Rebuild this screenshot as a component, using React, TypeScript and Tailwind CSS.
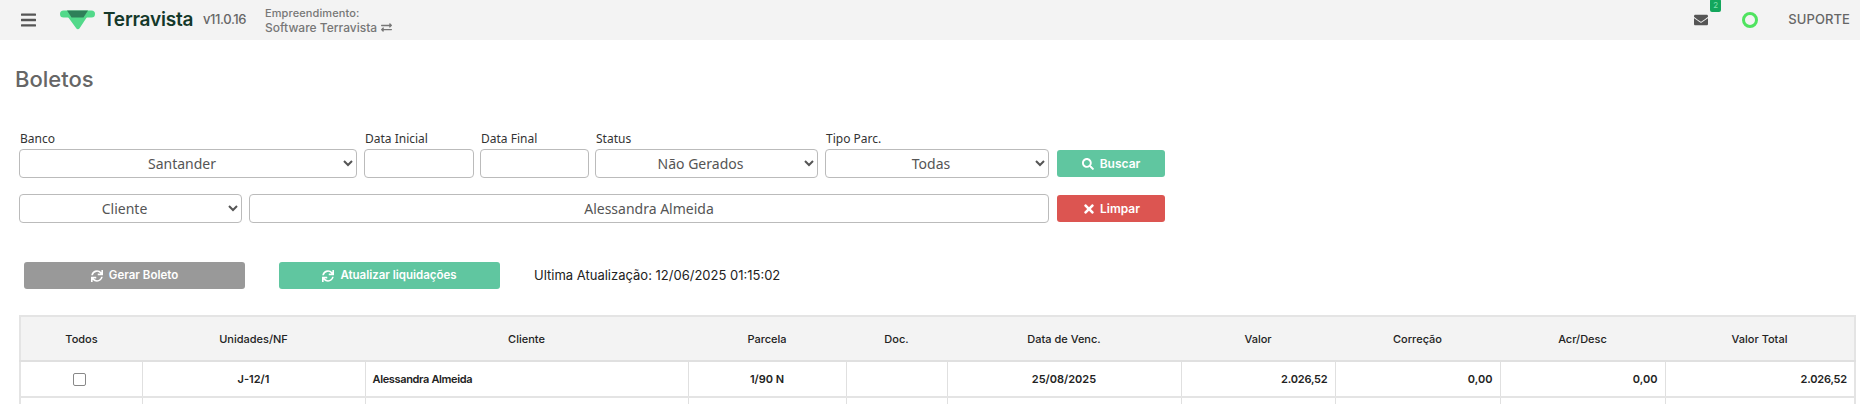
import { FaBars, FaEnvelope, FaExchangeAlt, FaSearch, FaSync, FaTimes } from 'react-icons/fa'
import { ReactNode } from 'react'
import clsx from 'clsx'

const HEAD_FONT = 'font-["Inter","Liberation_Sans",sans-serif]'
const FORM_FONT = 'font-["Noto_Sans","Open_Sans",sans-serif]'

const columns = [
  { title: 'Todos', width: 'w-[122px]' },
  { title: 'Unidades/NF', width: 'w-[223px]' },
  { title: 'Cliente', width: 'w-[323px]' },
  { title: 'Parcela', width: 'w-[158px]' },
  { title: 'Doc.', width: 'w-[101px]' },
  { title: 'Data de Venc.', width: 'w-[234px]' },
  { title: 'Valor', width: 'w-[154px]' },
  { title: 'Correção', width: 'w-[165px]' },
  { title: 'Acr/Desc', width: 'w-[165px]' },
  { title: 'Valor Total', width: 'w-[190px]' },
]

function Logo() {
  return (
    <svg width="36" height="20" viewBox="0 0 36 20" className="shrink-0">
      <path d="M3.5 0.5H31.5a3.5 3.5 0 0 1 0 7H3.5a3.5 3.5 0 0 1 0-7Z" fill="#52d98a" />
      <path d="M8 7H27L19.6 18.2a2 2 0 0 1-3.4 0Z" fill="#52d98a" />
      <path d="M7 0.5H28L23.5 7.5H11.5Z" fill="#2e8059" />
    </svg>
  )
}

function Field({ label, width, children }: { label: string, width: string, children: ReactNode }) {
  return (
    <div className={clsx('flex flex-col shrink-0', width)}>
      <label className="h-[21px] pt-[2px] pl-px text-[12px] leading-[18px] text-[#333]">{label}</label>
      {children}
    </div>
  )
}

function Select({ value, className }: { value: string, className?: string }) {
  return (
    <select
      defaultValue={value}
      className={clsx('block h-[29px] bg-white border border-[#bbb] rounded-[4px] text-center text-[14px] text-[#555]', className)}
    >
      <option>{value}</option>
    </select>
  )
}

function Button({ icon, children, className }: { icon: ReactNode, children: ReactNode, className: string }) {
  return (
    <button className={clsx('flex items-center justify-center gap-[6px] rounded-[3px] text-white font-semibold', className)}>
      {icon}
      {children}
    </button>
  )
}

export default function App() {
  return (
    <div className={clsx('h-[404px] w-[1860px] overflow-hidden bg-white', HEAD_FONT)}>
      <header className="flex items-center h-[40px] bg-[#f3f3f3] text-[#666]">
        <FaBars className="ml-[21px] text-[#555] w-[15px] h-[18px]" />
        <div className="ml-[24px]"><Logo /></div>
        <span className="ml-[7px] text-[19px] font-semibold text-[#14382a] w-[93px] tracking-[-0.2px]">Terravista</span>
        <span className="ml-[7px] text-[13px] font-medium text-[#666] w-[58px] tracking-[-0.4px]">v11.0.16</span>
        <div className="ml-[4px] flex flex-col text-[#777]">
          <span className="text-[11px] leading-[15px] font-medium tracking-[0.1px]">Empreendimento:</span>
          <span className="flex items-center gap-1 text-[12px] leading-[14px] font-medium">
            Software Terravista <FaExchangeAlt className="w-[11px] h-[11px]" />
          </span>
        </div>

        <div className="ml-auto flex items-center">
          <div className="relative mr-[34px]">
            <FaEnvelope className="w-[14px] h-[14px] text-[#555]" />
            <span className="absolute left-[16px] -top-[14px] w-[11px] h-[13px] rounded-[2px] bg-[#13a65c] text-[#7fe0ac] text-[8px] leading-[13px] text-center">2</span>
          </div>
          <div className="w-[16px] h-[16px] rounded-full border-[3px] border-[#4fe35f]" />
          <span className="ml-[30px] mr-[10px] text-[13px] font-medium text-[#666] tracking-[0.1px]">SUPORTE</span>
        </div>
      </header>

      <h1 className="pt-[27px] pl-[15px] h-[77px] text-[22px] leading-[25px] font-medium text-[#666]">Boletos</h1>

      <div className={clsx('pl-[19px]', FORM_FONT)}>
        <div className="flex items-end mt-[11px] h-[50px]">
          <Field label="Banco" width="w-[338px] mr-[7px]">
            <Select value="Santander" className="w-full" />
          </Field>
          <Field label="Data Inicial" width="w-[110px] mr-[6px]">
            <input className="block h-[29px] w-full border border-[#bbb] rounded-[4px]" />
          </Field>
          <Field label="Data Final" width="w-[109px] mr-[6px]">
            <input className="block h-[29px] w-full border border-[#bbb] rounded-[4px]" />
          </Field>
          <Field label="Status" width="w-[223px] mr-[7px]">
            <Select value="Não Gerados" className="w-full" />
          </Field>
          <Field label="Tipo Parc." width="w-[224px] mr-[8px]">
            <Select value="Todas" className="w-full" />
          </Field>
          <Button icon={<FaSearch className="w-[12px] h-[12px]" />} className={clsx('w-[108px] h-[27px] mb-px bg-[#60c6a0] text-[12px]', HEAD_FONT)}>
            Buscar
          </Button>
        </div>

        <div className="flex items-center mt-[16px] h-[29px]">
          <Select value="Cliente" className="w-[223px] mr-[7px]" />
          <input
            defaultValue="Alessandra Almeida"
            className="block h-[29px] w-[800px] mr-[8px] border border-[#bbb] rounded-[4px] text-center text-[14px] text-[#555]"
          />
          <Button icon={<FaTimes className="w-[14px] h-[14px] -mr-[2px]" />} className={clsx('w-[108px] h-[27px] bg-[#dc5551] text-[12px]', HEAD_FONT)}>
            Limpar
          </Button>
        </div>
      </div>

      <div className="flex items-center mt-[39px] ml-[24px] h-[27px]">
        <Button icon={<FaSync className="w-[12px] h-[12px]" />} className="w-[221px] h-[27px] bg-[#999] text-[11.5px]">
          Gerar Boleto
        </Button>
        <Button icon={<FaSync className="w-[12px] h-[12px]" />} className="w-[221px] h-[27px] ml-[34px] bg-[#60c6a0] text-[11.5px]">
          Atualizar liquidações
        </Button>
        <span className="ml-[34px] text-[13px] font-normal text-[#222]">Ultima Atualização: 12/06/2025 01:15:02</span>
      </div>

      <table className="mt-[26px] ml-[19px] w-[1835px] table-fixed border-collapse border-2 border-[#e4e4e4] text-[11px] text-[#222]">
        <thead>
          <tr className="h-[45px] bg-[#f3f3f3] border-b-2 border-[#e0e0e0]">
            {columns.map((column) => (
              <th key={column.title} className={clsx('pt-px font-medium text-center', column.width)}>{column.title}</th>
            ))}
          </tr>
        </thead>
        <tbody className="font-semibold">
          <tr className="h-[36px] border-b-2 border-[#e4e4e4]">
            <td className="text-center"><input type="checkbox" className="align-middle mr-[3px] w-[13px] h-[13px] appearance-none border border-[#888] rounded-[2px] bg-white" /></td>
            <td className="border-l border-[#e0e0e0] text-center">J-12/1</td>
            <td className="border-l border-[#e0e0e0] px-[7px] tracking-[-0.35px]">Alessandra Almeida</td>
            <td className="border-l border-[#e0e0e0] text-center">1/90 N</td>
            <td className="border-l border-[#e0e0e0]"></td>
            <td className="border-l border-[#e0e0e0] text-center">25/08/2025</td>
            <td className="border-l border-[#e0e0e0] px-[7px] text-right tracking-[-0.2px]">2.026,52</td>
            <td className="border-l border-[#e0e0e0] px-[7px] text-right">0,00</td>
            <td className="border-l border-[#e0e0e0] px-[7px] text-right">0,00</td>
            <td className="border-l border-[#e0e0e0] px-[7px] text-right tracking-[-0.2px]">2.026,52</td>
          </tr>
          <tr className="h-[36px]">
            <td></td>
            {columns.slice(1).map((column) => (
              <td key={column.title} className="border-l border-[#e0e0e0]"></td>
            ))}
          </tr>
        </tbody>
      </table>
    </div>
  )
}
